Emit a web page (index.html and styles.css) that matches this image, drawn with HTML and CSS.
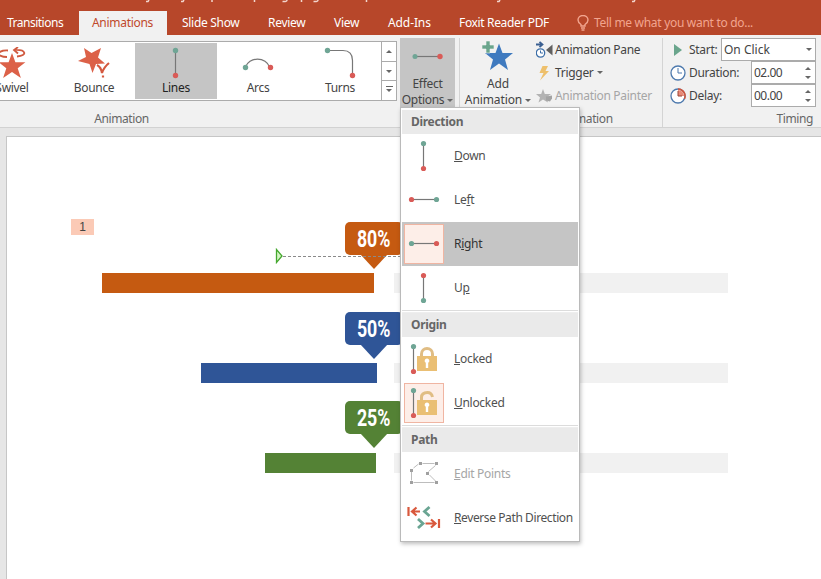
FILE: index.html
```html
<!DOCTYPE html>
<html lang="en">
<head>
    <meta charset="UTF-8">
    <meta name="viewport" content="width=device-width, initial-scale=1.0">
    <title>Animations - Effect Options</title>
    <link rel="stylesheet" href="styles.css">
</head>
<body>

    <div class="titlebar">
        <svg width="821" height="3" viewBox="0 0 821 3" fill="none" stroke="#f3d6cd" stroke-width="1.500"><path d="M149 0l-1 1.500h-2M184 0l-1 1.500h-2M212 0v2M254.500 0v2M287 0q0 2-4.500 1.500M301.500 0v2M318 0q0 2-4.500 1.500M366.500 0v2M500 0l-1 1.500h-2M635 0l-1 1.500h-2"/></svg>
    </div>

    <!-- ribbon tabs -->
    <nav class="tabs">
        <span class="tab tab-transitions">Transitions</span>
        <span class="tab tab-animations active">Animations</span>
        <span class="tab tab-slideshow">Slide Show</span>
        <span class="tab tab-review">Review</span>
        <span class="tab tab-view">View</span>
        <span class="tab tab-addins">Add-Ins</span>
        <span class="tab tab-foxit">Foxit Reader PDF</span>
        <span class="tab tell-me">
            <svg width="12" height="16" viewBox="0 0 12 16" fill="none" stroke="#f2a58f" stroke-width="1.400"><path d="M4 11V9.500C2.200 8.300 1 7 1 5a5 4.500 0 0 1 10 0c0 2-1.200 3.300-3 4.500V11zM4 13h4M4.500 15h3"/></svg>
            <span>Tell me what you want to do...</span>
        </span>
    </nav>

    <div class="ribbon">
        <div class="group group-gallery">
            <div class="gallery">
                <div class="effect">
                    <svg width="32" height="32" viewBox="0 0 32 32"><path d="M16 6l3.400 9.200h10l-7.700 6 3.200 9.800-8.900-6-8.900 6 3.200-9.800-7.700-6h10z" fill="#dc6148"/><path d="M11 10C0 10 0 3 12 3.500M21 9.500c11-1 9-7-2-6.500M22 0l-4 3 4 3.500" fill="none" stroke="#d05a40" stroke-width="1.800"/></svg>
                    <span>Swivel</span>
                </div>
                <div class="effect">
                    <svg width="32" height="32" viewBox="0 0 32 32"><path d="M23 1l-3 9.500 7 6-9 .5-3.500 9-3-9L0 14l8-4L6 1l7.500 5z" fill="#dc6148"/><path d="M19 18q4 2 5 8 2-6 7-10M25 28.500v2" fill="none" stroke="#d4593f" stroke-width="2.200"/></svg>
                    <span>Bounce</span>
                </div>
                <div class="effect selected">
                    <svg width="32" height="32" viewBox="0 0 32 32"><path class="wire" d="M15.500 4v24"/><circle class="start" cx="15.500" cy="3.500" r="2.700"/><circle class="end" cx="15.500" cy="28.500" r="2.700"/></svg>
                    <span>Lines</span>
                </div>
                <div class="effect">
                    <svg width="32" height="32" viewBox="0 0 32 32"><path class="wire" d="M3.500 20a12.500 11 0 0 1 24 0"/><circle class="start" cx="3.500" cy="20.500" r="2.700"/><circle class="end" cx="28.500" cy="20.500" r="2.700"/></svg>
                    <span>Arcs</span>
                </div>
                <div class="effect">
                    <svg width="32" height="32" viewBox="0 0 32 32"><path class="wire" d="M4 3.500h15q9.500 0 9.500 10V28"/><circle class="start" cx="3.500" cy="3.500" r="2.700"/><circle class="end" cx="28.500" cy="28.500" r="2.700"/></svg>
                    <span>Turns</span>
                </div>
                <div class="gallery-scroll">
                    <span><i class="arrow-up"></i></span>
                    <span><i class="arrow-down"></i></span>
                    <span class="more"><i class="arrow-down"></i></span>
                </div>
            </div>
            <div class="group-title">Animation</div>
        </div>

        <div class="big-button effect-options">
            <svg width="32" height="32" viewBox="0 0 32 32"><path class="wire" d="M3 16.500h24"/><circle class="start" cx="3" cy="16.500" r="2.500"/><circle class="end" cx="28" cy="16.500" r="2.700"/></svg>
            <span>Effect</span>
            <span>Options<i class="arrow-down"></i></span>
        </div>

        <div class="group group-advanced">
            <div class="advanced">
                <div class="big-button add-animation">
                    <svg width="32" height="32" viewBox="0 0 32 32"><path d="M17 3.500l3.500 9.500H31l-8 6.500 3 10.500-9-6.500-9 6.500 3-10.500L3 13h10.500z" fill="#3f7abf"/><path d="M4 1h4v4h4v4H8v4H4V9H0V5h4z" fill="#6aa58c" stroke="#f1f1f1" stroke-width=".6"/></svg>
                    <span>Add</span>
                    <span>Animation<i class="arrow-down"></i></span>
                </div>
                <div class="small-buttons">
                    <div class="small-button">
                        <svg width="18" height="18" viewBox="0 0 18 18"><path d="M0 3.500h6M3.500.8l3 2.700-3 2.700" fill="none" stroke="#3a5f91" stroke-width="1.800"/><circle cx="4.500" cy="12" r="4.200" fill="#fff" stroke="#3d6fa8" stroke-width="1.300"/><path d="M4.500 9.500V12H7" fill="none" stroke="#3d6fa8"/><path d="M16.500 3.500v11L10 9z" fill="#606060"/></svg>
                        <span>Animation Pane</span>
                    </div>
                    <div class="small-button">
                        <svg width="18" height="18" viewBox="0 0 18 18"><path d="M6.500 2H12L9.500 7H13L4 16.500 7.500 9h-4z" fill="#eec06c"/></svg>
                        <span>Trigger</span><i class="arrow-down"></i>
                    </div>
                    <div class="small-button disabled">
                        <svg width="18" height="18" viewBox="0 0 18 18"><path d="M7 2l1.800 5H15l-4.500 3.500 1.500 5-5-3-4.500 3L4 10.500 0 7h5.200z" fill="#b3b3b3"/><path d="M10 9.500l6-1v3l-2 3-4-1z" fill="#a3a3a3"/></svg>
                        <span>Animation Painter</span>
                    </div>
                </div>
            </div>
            <div class="group-title">Advanced Animation</div>
        </div>

        <div class="group group-timing">
            <div class="timing">
                <div class="timing-row">
                    <svg width="16" height="16" viewBox="0 0 16 16"><path d="M4 2l8 6-8 6z" fill="#6aa58c"/></svg>
                    <span>Start:</span>
                    <div class="select"><span>On Click</span><i class="arrow-down"></i></div>
                </div>
                <div class="timing-row">
                    <svg width="16" height="16" viewBox="0 0 16 16"><circle cx="8" cy="8" r="7" fill="#fff" stroke="#4d79ad" stroke-width="1.300"/><path d="M8 3v5h4" fill="none" stroke="#4d79ad"/></svg>
                    <span>Duration:</span>
                    <div class="spinner"><span>02.00</span><b><i class="arrow-up"></i><i class="arrow-down"></i></b></div>
                </div>
                <div class="timing-row">
                    <svg width="16" height="16" viewBox="0 0 16 16"><circle cx="8" cy="8" r="7" fill="#fff" stroke="#4d79ad" stroke-width="1.300"/><path d="M8 8V2a6 6 0 0 1 6 6z" fill="#e88a78"/><path d="M8 1a7 7 0 0 1 6.400 10" fill="none" stroke="#d2553c" stroke-width="1.500"/><path d="M8 3v5h4" fill="none" stroke="#9a4436"/></svg>
                    <span>Delay:</span>
                    <div class="spinner"><span>00.00</span><b><i class="arrow-up"></i><i class="arrow-down"></i></b></div>
                </div>
            </div>
            <div class="group-title">Timing</div>
        </div>
    </div>

    <!-- slide with the progress bars -->
    <div class="workspace">
        <div class="slide">
            <div class="order-tag">1</div>
            <svg class="motion-path" width="140" height="16" viewBox="0 0 140 16"><path d="M8 8.500h132" stroke="#8a8a8a" stroke-dasharray="3 2"/><path d="M1.500 1.500v13L7 8z" fill="#d5f5c5" stroke="#45a82f" stroke-width="1.300"/></svg>

            <div class="progress orange">
                <div class="bubble"><span>80%</span></div>
                <div class="bar"></div>
                <div class="track"></div>
            </div>
            <div class="progress blue">
                <div class="bubble"><span>50%</span></div>
                <div class="bar"></div>
                <div class="track"></div>
            </div>
            <div class="progress green">
                <div class="bubble"><span>25%</span></div>
                <div class="bar"></div>
                <div class="track"></div>
            </div>
        </div>
    </div>

    <!-- effect options dropdown -->
    <div class="menu">
        <div class="menu-title">Direction</div>
        <div class="menu-item">
            <div class="menu-icon"><svg width="32" height="32" viewBox="0 0 32 32"><path class="wire" d="M15.500 4v24"/><circle class="start" cx="15.500" cy="3.500" r="2.600"/><circle class="end" cx="15.500" cy="28.500" r="2.600"/></svg></div>
            <span><u>D</u>own</span>
        </div>
        <div class="menu-item">
            <div class="menu-icon"><svg width="32" height="32" viewBox="0 0 32 32"><path class="wire" d="M4 15.500h24"/><circle class="end" cx="3.500" cy="15.500" r="2.600"/><circle class="start" cx="28.500" cy="15.500" r="2.600"/></svg></div>
            <span>Le<u>f</u>t</span>
        </div>
        <div class="menu-item hover">
            <div class="menu-icon checked"><svg width="32" height="32" viewBox="0 0 32 32"><path class="wire" d="M4 15.500h24"/><circle class="start" cx="3.500" cy="15.500" r="2.600"/><circle class="end" cx="28.500" cy="15.500" r="2.600"/></svg></div>
            <span>R<u>i</u>ght</span>
        </div>
        <div class="menu-item">
            <div class="menu-icon"><svg width="32" height="32" viewBox="0 0 32 32"><path class="wire" d="M15.500 4v24"/><circle class="end" cx="15.500" cy="3.500" r="2.600"/><circle class="start" cx="15.500" cy="28.500" r="2.600"/></svg></div>
            <span>U<u>p</u></span>
        </div>
        <div class="menu-line"></div>
        <div class="menu-title">Origin</div>
        <div class="menu-item">
            <div class="menu-icon"><svg width="32" height="32" viewBox="0 0 32 32"><path class="wire" d="M5.500 4v24"/><circle class="start" cx="5.500" cy="3.500" r="2.600"/><circle class="end" cx="5.500" cy="28.500" r="2.600"/><path d="M13.500 14v-3a5.500 5.500 0 0 1 11 0v3" fill="none" stroke="#e0bd84" stroke-width="3"/><path d="M9 13h20v15H9z" fill="#eabf74"/><path d="M19 15.500a2.300 2.300 0 0 1 1.200 4.300V25h-2.400v-5.200a2.300 2.300 0 0 1 1.200-4.300z" fill="#fff"/></svg></div>
            <span><u>L</u>ocked</span>
        </div>
        <div class="menu-item">
            <div class="menu-icon checked"><svg width="32" height="32" viewBox="0 0 32 32"><path class="wire" d="M5.500 4v24"/><circle class="start" cx="5.500" cy="3.500" r="2.600"/><circle class="end" cx="5.500" cy="28.500" r="2.600"/><path d="M13.500 14v-3.500q0-5 6-5 4 0 5 4.500" fill="none" stroke="#e0bd84" stroke-width="3"/><path d="M9 13h20v15H9z" fill="#eabf74"/><path d="M19 15.500a2.300 2.300 0 0 1 1.200 4.300V25h-2.400v-5.200a2.300 2.300 0 0 1 1.200-4.300z" fill="#fff"/></svg></div>
            <span><u>U</u>nlocked</span>
        </div>
        <div class="menu-line"></div>
        <div class="menu-title">Path</div>
        <div class="menu-item disabled">
            <div class="menu-icon"><svg width="32" height="32" viewBox="0 0 32 32"><path d="M3.500 22.500V14M5.500 10l5-4M14.500 5.500h12M27.500 7.500l-7 6M21.500 17l6 6M5.500 24.500h21" fill="none" stroke="#bdbdbd"/><path d="M2 11h3v3H2zM11 4h3v3h-3zM27 4h3v3h-3zM18 14h3v3h-3zM2 23h3v3H2zM27 23h3v3h-3z" fill="#a0a0a0"/></svg></div>
            <span><u>E</u>dit Points</span>
        </div>
        <div class="menu-item">
            <div class="menu-icon"><svg width="34" height="32" viewBox="0 0 34 32" fill="none"><path d="M1.500 5v9M13 9.500H5M9.500 5.500l-4.500 4 4.500 4M32 26v-9M18.500 21.500H28M24 17.500l4.500 4-4.500 4" stroke="#d9593d" stroke-width="2.200"/><path d="M22.500 5l-5 4.500 5 4.500M11 17l5 4.500-5 4.500" stroke="#6aa593" stroke-width="2.800"/></svg></div>
            <span class="lbl-reverse"><u>R</u>everse Path Direction</span>
        </div>
    </div>

</body>
</html>
```
FILE: styles.css
```css
* {
    box-sizing: border-box;
}

body {
    margin: 0;
    width: 821px;
    height: 579px;
    overflow: hidden;
    background: #fff;
    color: #444;
    font-family: "Noto Sans", "Open Sans", sans-serif;
    font-size: 12px;
    letter-spacing: -0.3px;
    line-height: 16px;
}

svg {
    display: block;
    flex: none;
}

.wire {
    fill: none;
    stroke: #777;
    stroke-width: 1.2;
}

.start {
    fill: #6fa595;
}

.end {
    fill: #d95b57;
}

.arrow-down,
.arrow-up {
    display: inline-block;
    flex: none;
    border: 3px solid transparent;
    border-bottom-width: 0;
    border-top-color: #666;
}

.arrow-up {
    border-width: 0 3px 3px;
    border-bottom-color: #666;
}

.titlebar {
    height: 11px;
    background: #b7472a;
}

/* tabs */
.tabs {
    display: flex;
    height: 24px;
    background: #b7472a;
    color: #fff;
    white-space: nowrap;
}

.tab {
    flex: none;
    height: 24px;
    line-height: 24px;
    padding-left: 15px;
}

.tab-transitions {
    width: 79px;
    padding-left: 7px;
    letter-spacing: -0.5px;
}

.tab.active {
    width: 88px;
    padding-left: 13px;
    background: #f1f1f1;
    color: #c0492b;
}

.tab-slideshow { width: 86px; }
.tab-review { width: 66px; }
.tab-view { width: 53px; }
.tab-addins { width: 72px; padding-left: 16px; letter-spacing: -0.1px; }
.tab-foxit { width: 133px; letter-spacing: -0.35px; }

.tab.tell-me {
    display: flex;
    align-items: center;
    gap: 5px;
    padding-left: 0;
    color: #f2a58f;
}

/* ribbon */
.ribbon {
    display: flex;
    height: 93px;
    padding-top: 3px;
    background: #f1f1f1;
    border-bottom: 1px solid #d2d2d2;
    white-space: nowrap;
}

.group {
    flex: none;
    display: flex;
    flex-direction: column;
    justify-content: space-between;
    height: 89px;
}

.group-title {
    color: #666;
    letter-spacing: -0.4px;
    text-align: center;
}

.group-gallery {
    width: 400px;
    padding-top: 3px;
}

.group-gallery .group-title {
    width: 243px;
}

.gallery {
    display: flex;
    justify-content: flex-end;
    width: 397px;
    height: 60px;
    overflow: hidden;
    background: #fff;
    border: 1px solid #ababab;
    border-left: 0;
}

.effect {
    flex: none;
    display: flex;
    flex-direction: column;
    align-items: center;
    gap: 1px;
    width: 82px;
    height: 56px;
    margin-top: 1px;
    padding-top: 4px;
}

.effect.selected {
    background: #c5c5c5;
    color: #222;
}

.gallery-scroll {
    flex: none;
    display: flex;
    flex-direction: column;
    width: 15px;
    border-left: 1px solid #ababab;
}

.gallery-scroll span {
    display: flex;
    flex: 1;
    align-items: center;
    justify-content: center;
    border-top: 1px solid #ababab;
}

.gallery-scroll span:first-child {
    border-top: 0;
}

.gallery-scroll .more i {
    position: relative;
}

.gallery-scroll .more i::before {
    content: "";
    position: absolute;
    left: -3px;
    top: -6px;
    width: 7px;
    height: 1px;
    background: #666;
}

.big-button {
    flex: none;
    display: flex;
    flex-direction: column;
    align-items: center;
    height: 70px;
    padding-top: 2px;
}

.big-button svg {
    margin-bottom: 4px;
}

.big-button i {
    margin: 0 0 2px 3px;
}

.effect-options {
    width: 55px;
    background: #c5c5c5;
}

.group-advanced {
    width: 203px;
    margin-left: 4px;
    border-left: 1px solid #d4d4d4;
}

.group-advanced .group-title {
    padding-right: 6px;
}

.advanced {
    display: flex;
}

.add-animation {
    width: 76px;
    letter-spacing: -0.1px;
}

.small-button {
    display: flex;
    align-items: center;
    height: 23px;
}

.small-button svg {
    margin-right: 1px;
}

.small-button i {
    margin-left: 3px;
}

.small-button.disabled,
.menu-item.disabled {
    color: #a6a6a6;
}

.group-timing {
    width: 159px;
    padding-left: 7px;
    border-left: 1px solid #d4d4d4;
}

.group-timing .group-title {
    padding-right: 8px;
    text-align: right;
}

.timing-row {
    display: flex;
    align-items: center;
    width: 146px;
    height: 23px;
}

.timing-row svg {
    margin-right: 3px;
}

.select,
.spinner {
    display: flex;
    align-items: center;
    justify-content: space-between;
    width: 95px;
    height: 23px;
    margin-left: auto;
    padding: 0 3px 0 2px;
    background: #fff;
    border: 1px solid #ababab;
    letter-spacing: 0;
}

.spinner {
    width: 65px;
    padding-right: 4px;
    letter-spacing: -0.5px;
}

.spinner b {
    display: flex;
    flex-direction: column;
    gap: 6px;
}

/* slide */
.workspace {
    height: 451px;
    padding: 8px 0 0 6px;
    background: #e6e6e6;
}

.slide {
    position: relative;
    height: 443px;
    padding-top: 85px;
    background: #fff;
    border: 1px solid #c6c6c6;
    border-width: 1px 0 0 1px;
}

.order-tag {
    position: absolute;
    left: 64px;
    top: 82px;
    width: 23px;
    height: 16px;
    background: #fbcab6;
    font-family: "Liberation Sans", sans-serif;
    text-align: center;
}

.motion-path {
    position: absolute;
    left: 268px;
    top: 111px;
    z-index: 1;
}

.progress {
    display: grid;
    grid-template-columns: 370px 17px 334px;
    grid-template-rows: 51px 20px;
    height: 90px;
}

.bubble {
    position: relative;
    grid-column: 1 / 4;
    width: 58px;
    height: 33px;
    margin-left: 338px;
    border-radius: 5px;
    background: var(--color);
    color: #fff;
    font-family: Roboto, sans-serif;
    font-size: 24px;
    font-weight: bold;
    letter-spacing: 0;
    line-height: 34px;
    text-align: center;
}

/* condensed percent figures */
.bubble span {
    display: inline-block;
    transform: scaleX(0.74);
}

.bubble::after {
    content: "";
    position: absolute;
    left: 15px;
    top: 32px;
    border: 14px solid transparent;
    border-top: 15px solid var(--color);
    border-bottom: 0;
}

.bar {
    justify-self: end;
    width: var(--bar);
    background: var(--color);
}

.track {
    grid-column: 3;
    background: #f1f1f1;
}

.orange {
    --color: #c55a11;
    --bar: 272px;
}

.orange .bar { margin-right: 3px; }

.blue {
    --color: #2f5597;
    --bar: 176px;
}

.green {
    --color: #548235;
    --bar: 111px;
}

.green .bar { margin-right: 1px; }
.green .bubble { margin-top: -1px; }

/* dropdown */
.menu {
    position: absolute;
    left: 400px;
    top: 107px;
    z-index: 2;
    width: 180px;
    height: 435px;
    padding: 2px 1px;
    background: #fff;
    border: 1px solid #bababa;
    box-shadow: 1px 2px 4px rgba(0, 0, 0, 0.25);
    white-space: nowrap;
}

.menu-title {
    height: 24px;
    padding-left: 9px;
    background: #eaeaea;
    color: #666;
    font-weight: bold;
    line-height: 24px;
}

.menu-item {
    display: flex;
    align-items: center;
    height: 44px;
    padding-left: 2px;
    color: #505050;
}

.menu-item.hover {
    background: #c5c5c5;
    color: #333;
}

.menu-icon {
    flex: none;
    display: flex;
    align-items: center;
    justify-content: center;
    width: 40px;
    height: 40px;
    margin-right: 10px;
}

.menu-icon.checked {
    background: #fdeee8;
    border: 1px solid #f0b5a2;
}

.menu-line {
    height: 3px;
    border: 1px solid #dcdcdc;
    border-width: 1px 0;
    border-bottom-color: #eee;
}

.lbl-reverse {
    letter-spacing: -0.4px;
}
```
